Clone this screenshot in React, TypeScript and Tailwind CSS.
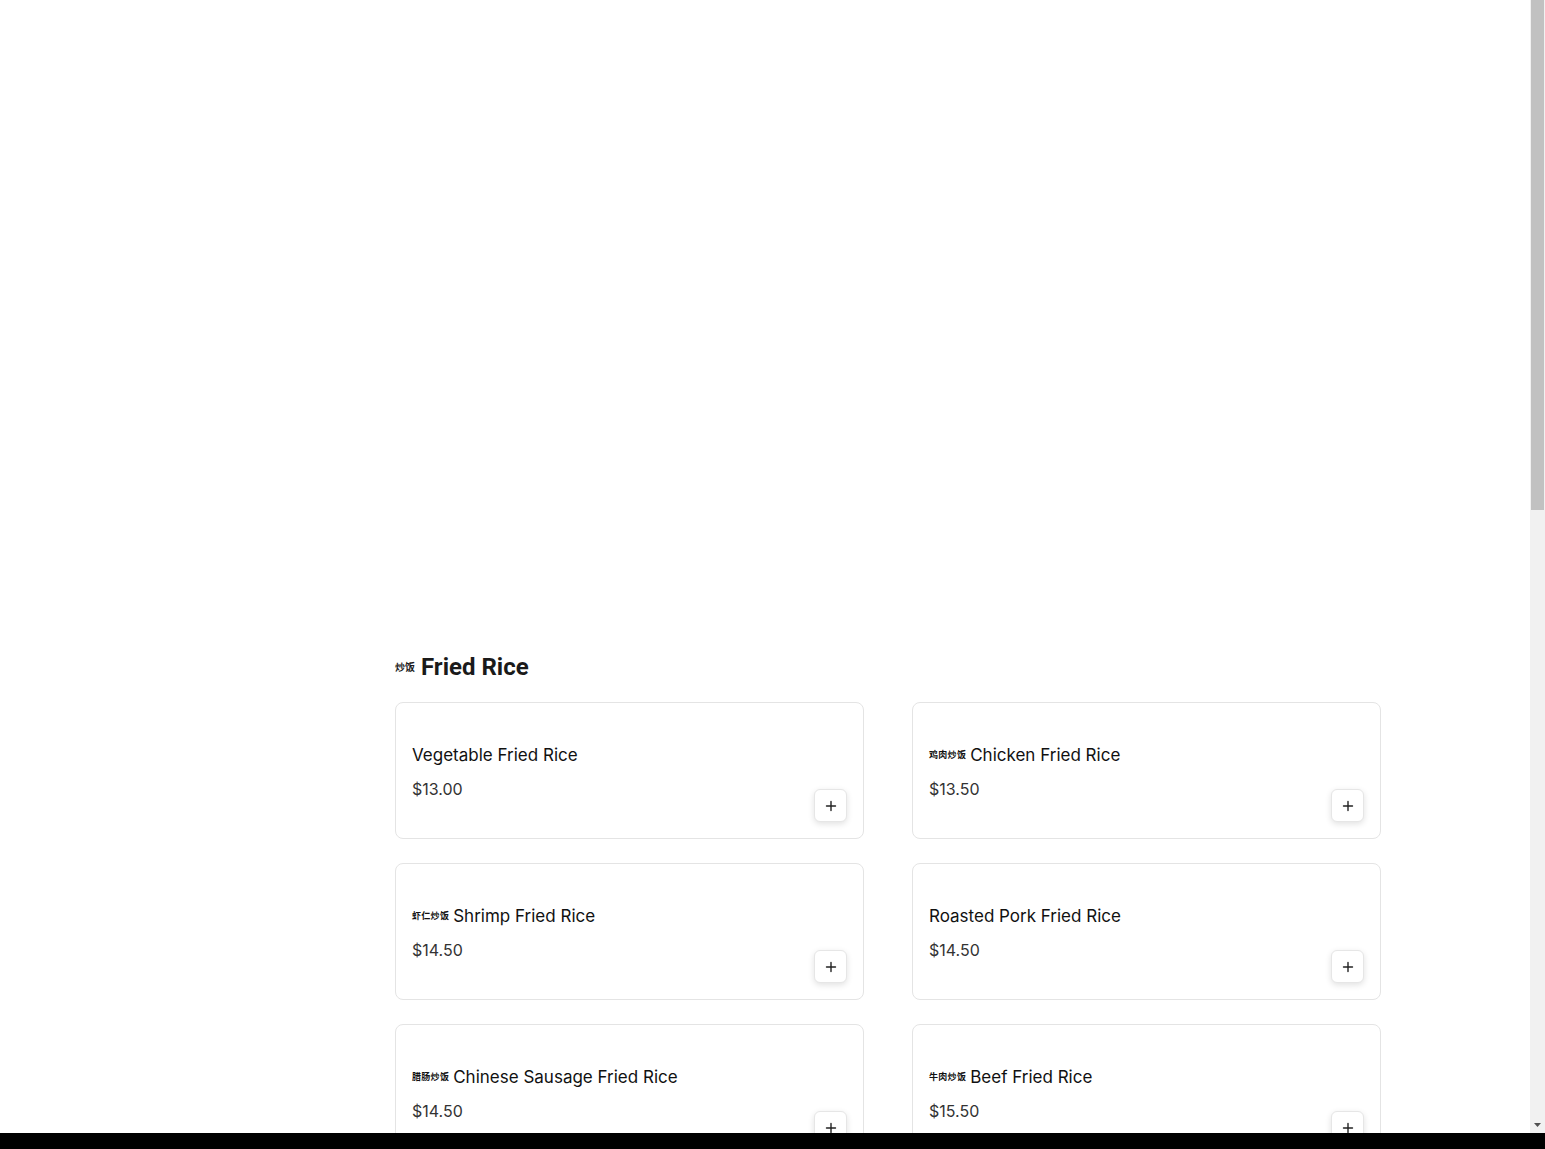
import React from "react";

type Item = { zh?: string; en: string; price: string };

const items: Item[] = [
  { en: "Vegetable Fried Rice", price: "$13.00" },
  { zh: "鸡肉炒饭", en: "Chicken Fried Rice", price: "$13.50" },
  { zh: "虾仁炒饭", en: "Shrimp Fried Rice", price: "$14.50" },
  { en: "Roasted Pork Fried Rice", price: "$14.50" },
  { zh: "腊肠炒饭", en: "Chinese Sausage Fried Rice", price: "$14.50" },
  { zh: "牛肉炒饭", en: "Beef Fried Rice", price: "$15.50" },
];

const cardFont = { fontFamily: "Inter, 'Noto Sans', sans-serif" };

function Card({ item }: { item: Item }) {
  return (
    <div className="flex items-end justify-between rounded-lg border border-[#e4e4e4] bg-white p-4">
      <div className="pt-[22px] pb-[21px]">
        <div className="flex items-center text-[17px] leading-7 text-[#111111]">
          {item.zh && (
            <span
              className="mr-[4px] text-[9px] font-bold tracking-[0.3px]"
              style={{ fontFamily: "'Noto Sans CJK SC', sans-serif" }}
            >
              {item.zh}
            </span>
          )}
          <span>{item.en}</span>
        </div>
        <div className="mt-2 text-[16px] leading-6 text-[#333333]">{item.price}</div>
      </div>
      <button className="flex h-[33px] w-[33px] items-center justify-center rounded-md border border-[#e6e6e6] bg-white shadow-[0_2px_6px_rgba(0,0,0,0.12)]">
        <svg width="12" height="12" viewBox="0 0 12 12" fill="none">
          <path d="M6 1.5v9M1.5 6h9" stroke="#222" strokeWidth="1.4" strokeLinecap="round" />
        </svg>
      </button>
    </div>
  );
}

export default function App() {
  return (
    <div className="min-h-screen bg-white" style={cardFont}>
      <div className="mx-auto w-[1265px] px-6 pb-[1300px]">
        <div className="h-[651px]" />
        <div className="grid grid-cols-[207px_1fr] gap-6">
          <div />
          <section>
            <h2
              className="mb-[19px] flex items-center text-[24px] font-bold leading-8 text-[#1a1a1a]"
              style={{ fontFamily: "Roboto, 'Noto Sans', sans-serif" }}
            >
              <span
                className="mr-[6px] text-[10px] font-bold"
                style={{ fontFamily: "'Noto Sans CJK SC', sans-serif" }}
              >
                炒饭
              </span>
              <span>Fried Rice</span>
            </h2>
            <div className="grid grid-cols-2 gap-x-12 gap-y-6">
              {items.map((it) => (
                <Card key={it.en} item={it} />
              ))}
            </div>
          </section>
        </div>
      </div>
      <div className="fixed right-0 top-0 bottom-4 flex w-[15px] flex-col justify-between bg-[#f1f1f1]">
        <div className="mx-[1px] h-[510px] bg-[#c1c1c1]" />
        <div className="mb-[6px] flex justify-center">
          <svg width="7" height="4" viewBox="0 0 7 4">
            <path d="M0 0h7L3.5 4z" fill="#505050" />
          </svg>
        </div>
      </div>
      <div className="fixed bottom-0 left-0 right-0 h-4 bg-black" />
    </div>
  );
}
